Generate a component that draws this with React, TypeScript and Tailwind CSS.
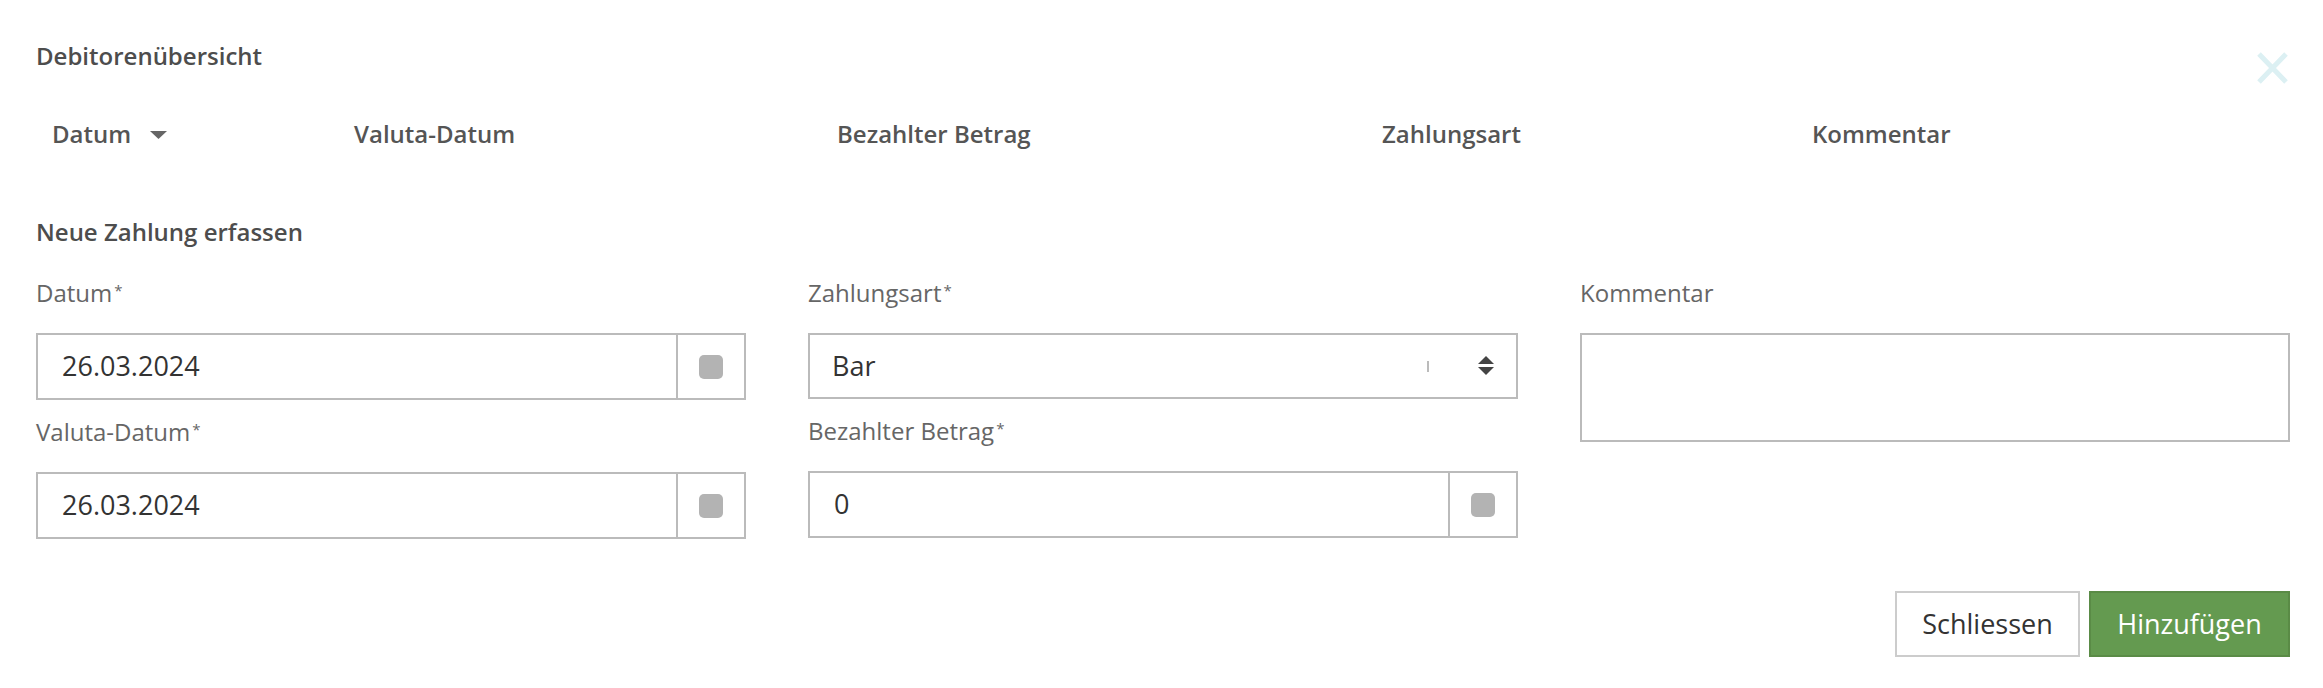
import React from 'react'

const HEADER_COLS = [
  { key: 'datum', label: 'Datum', w: 'w-[302px]', sort: true },
  { key: 'valuta', label: 'Valuta-Datum', w: 'w-[483px]' },
  { key: 'betrag', label: 'Bezahlter Betrag', w: 'w-[545px]' },
  { key: 'art', label: 'Zahlungsart', w: 'w-[430px]' },
  { key: 'kommentar', label: 'Kommentar', w: 'flex-1' },
]

function Label({ text, required }: { text: string; required?: boolean }) {
  return (
    <label className="flex items-start text-[24px] leading-[36px] text-[#666] mb-[22px]">
      {text}
      {required && <span className="text-[15px] leading-[15px] mt-[8px] ml-[2px]">*</span>}
    </label>
  )
}

function AddonInput({ value }: { value: string }) {
  return (
    <div className="flex h-[67px] border-2 border-[#bbb] bg-white">
      <input
        readOnly
        value={value}
        className="flex-1 min-w-0 px-[24px] text-[27px] text-[#333] outline-none bg-transparent font-['Open_Sans',sans-serif]"
      />
      <div className="w-[68px] shrink-0 border-l-2 border-[#bbb] flex items-center justify-center">
        <div className="w-[24px] h-[24px] rounded-[5px] bg-[#b3b3b3]" />
      </div>
    </div>
  )
}

export default function App() {
  return (
    <div className="min-h-screen bg-white pl-[36px] pr-[33px] font-['Open_Sans',sans-serif] text-[#555]">
      {/* Title + close */}
      <div className="flex items-start justify-between pt-[38px]">
        <h4 className="text-[24px] leading-[36px] font-semibold text-[#4d4d4d]">Debitorenübersicht</h4>
        <button className="mt-[13px] mr-[1px]">
          <svg width="33" height="34" viewBox="0 0 33 34">
            <path d="M3 3 L30 31 M30 3 L3 31" stroke="#dcf0f3" strokeWidth="5" />
          </svg>
        </button>
      </div>

      {/* Table header */}
      <div className="flex mt-[31px] text-[24px] leading-[36px] font-semibold text-[#555]">
        {HEADER_COLS.map(col => (
          <div key={col.key} className={`${col.w} pl-[16px] flex items-center`}>
            {col.label}
            {col.sort && (
              <svg width="17" height="8" viewBox="0 0 17 8" className="ml-[19px] mt-[2px]">
                <path d="M0 0 L17 0 L8.5 8 Z" fill="#666" />
              </svg>
            )}
          </div>
        ))}
      </div>

      {/* New payment */}
      <h4 className="mt-[62px] text-[24px] leading-[36px] font-semibold text-[#4d4d4d]">Neue Zahlung erfassen</h4>

      <div className="grid grid-cols-3 gap-x-[62px] mt-[25px]">
        <div>
          <Label text="Datum" required />
          <AddonInput value="26.03.2024" />
          <div className="mt-[14px]">
            <Label text="Valuta-Datum" required />
            <AddonInput value="26.03.2024" />
          </div>
        </div>
        <div>
          <Label text="Zahlungsart" required />
          <div className="flex items-center h-[66px] border-2 border-[#bbb] bg-white pl-[22px] pr-[22px]">
            <span className="flex-1 text-[27px] text-[#333]">Bar</span>
            <span className="w-[2px] h-[11px] bg-[#bbb] mr-[49px]" />
            <svg width="16" height="20" viewBox="0 0 16 20">
              <path d="M8 0 L16 8 L0 8 Z M0 11 L16 11 L8 19 Z" fill="#444" />
            </svg>
          </div>
          <div className="mt-[14px]">
            <Label text="Bezahlter Betrag" required />
            <AddonInput value="0" />
          </div>
        </div>
        <div>
          <Label text="Kommentar" />
          <textarea className="block w-full h-[109px] border-2 border-[#bbb] resize-none outline-none" />
        </div>
      </div>

      {/* Footer buttons */}
      <div className="flex justify-end gap-[9px] mt-[52px]">
        <button className="w-[185px] h-[66px] border-2 border-[#ccc] bg-white text-[27px] text-[#333]">Schliessen</button>
        <button className="w-[201px] h-[66px] border-2 border-[#5a8b46] bg-[#649a50] text-[27px] text-white">Hinzufügen</button>
      </div>
    </div>
  )
}
